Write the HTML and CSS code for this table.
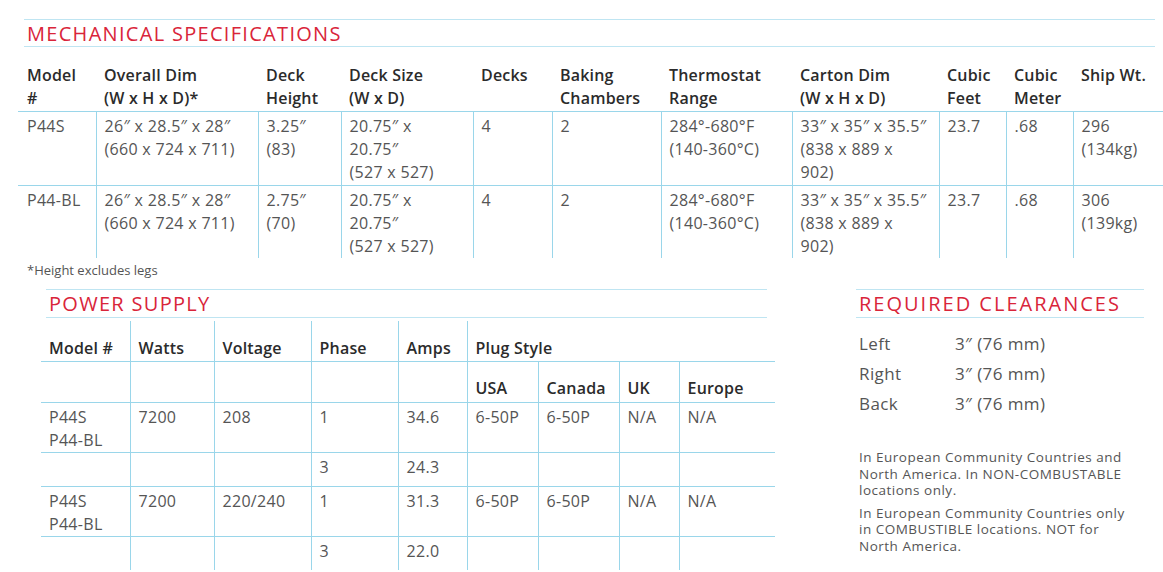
FILE: index.html
```html
<!DOCTYPE html>
<html lang="en">
<head>
<meta charset="utf-8">
<title>Specifications</title>
<link rel="stylesheet" href="styles.css">
</head>
<body>
<div class="page">
  <section class="mech">
    <h2 class="section-title mech-title">MECHANICAL SPECIFICATIONS</h2>
    <table class="spec mech-table">
      <colgroup>
        <col style="width:78px"><col style="width:162px"><col style="width:83px"><col style="width:132px"><col style="width:79px"><col style="width:109px"><col style="width:131px"><col style="width:147px"><col style="width:67px"><col style="width:67px"><col style="width:90px">
      </colgroup>
      <thead>
        <tr>
          <th>Model<br>#</th>
          <th>Overall Dim<br>(W x H x D)*</th>
          <th>Deck<br>Height</th>
          <th>Deck Size<br>(W x D)</th>
          <th>Decks</th>
          <th>Baking<br>Chambers</th>
          <th>Thermostat<br>Range</th>
          <th>Carton Dim<br>(W x H x D)</th>
          <th>Cubic<br>Feet</th>
          <th>Cubic<br>Meter</th>
          <th>Ship Wt.</th>
        </tr>
      </thead>
      <tbody>
        <tr>
          <td>P44S</td>
          <td>26″ x 28.5″ x 28″<br>(660 x 724 x 711)</td>
          <td>3.25″<br>(83)</td>
          <td>20.75″ x<br>20.75″<br>(527 x 527)</td>
          <td>4</td>
          <td>2</td>
          <td>284°-680°F<br>(140-360°C)</td>
          <td>33″ x 35″ x 35.5″<br>(838 x 889 x<br>902)</td>
          <td>23.7</td>
          <td>.68</td>
          <td>296<br>(134kg)</td>
        </tr>
        <tr>
          <td>P44-BL</td>
          <td>26″ x 28.5″ x 28″<br>(660 x 724 x 711)</td>
          <td>2.75″<br>(70)</td>
          <td>20.75″ x<br>20.75″<br>(527 x 527)</td>
          <td>4</td>
          <td>2</td>
          <td>284°-680°F<br>(140-360°C)</td>
          <td>33″ x 35″ x 35.5″<br>(838 x 889 x<br>902)</td>
          <td>23.7</td>
          <td>.68</td>
          <td>306<br>(139kg)</td>
        </tr>
      </tbody>
    </table>
    <p class="footnote">*Height excludes legs</p>
  </section>

  <div class="lower">
    <section class="power">
      <h2 class="section-title power-title">POWER SUPPLY</h2>
      <table class="spec power-table">
        <colgroup>
          <col style="width:89px"><col style="width:84px"><col style="width:97px"><col style="width:87px"><col style="width:69px"><col style="width:71px"><col style="width:81px"><col style="width:60px"><col style="width:96px">
        </colgroup>
        <thead>
          <tr class="head-main">
            <th>Model #</th>
            <th>Watts</th>
            <th>Voltage</th>
            <th>Phase</th>
            <th>Amps</th>
            <th colspan="4">Plug Style</th>
          </tr>
          <tr class="head-sub">
            <th></th>
            <th></th>
            <th></th>
            <th></th>
            <th></th>
            <th>USA</th>
            <th>Canada</th>
            <th>UK</th>
            <th>Europe</th>
          </tr>
        </thead>
        <tbody>
          <tr class="model-row">
            <td>P44S<br>P44-BL</td>
            <td>7200</td>
            <td>208</td>
            <td>1</td>
            <td>34.6</td>
            <td>6-50P</td>
            <td>6-50P</td>
            <td>N/A</td>
            <td>N/A</td>
          </tr>
          <tr class="phase-row">
            <td></td><td></td><td></td>
            <td>3</td>
            <td>24.3</td>
            <td></td><td></td><td></td><td></td>
          </tr>
          <tr class="model-row">
            <td>P44S<br>P44-BL</td>
            <td>7200</td>
            <td>220/240</td>
            <td>1</td>
            <td>31.3</td>
            <td>6-50P</td>
            <td>6-50P</td>
            <td>N/A</td>
            <td>N/A</td>
          </tr>
          <tr class="phase-row">
            <td></td><td></td><td></td>
            <td>3</td>
            <td>22.0</td>
            <td></td><td></td><td></td><td></td>
          </tr>
        </tbody>
      </table>
    </section>

    <section class="clearances">
      <h2 class="section-title power-title">REQUIRED CLEARANCES</h2>
      <dl class="clear-list">
        <div class="clear-row"><dt>Left</dt><dd>3″ (76 mm)</dd></div>
        <div class="clear-row"><dt>Right</dt><dd>3″ (76 mm)</dd></div>
        <div class="clear-row"><dt>Back</dt><dd>3″ (76 mm)</dd></div>
      </dl>
      <p class="note">In European Community Countries and<br>North America. In NON-COMBUSTABLE<br>locations only.</p>
      <p class="note">In European Community Countries only<br>in COMBUSTIBLE locations. NOT for<br>North America.</p>
    </section>
  </div>
</div>
</body>
</html>
```

FILE: styles.css
```css
* { box-sizing: border-box; }

html, body {
  margin: 0;
  padding: 0;
  background: #ffffff;
}

body {
  font-family: "Open Sans", "Liberation Sans", sans-serif;
  color: #555555;
}

.page {
  width: 1163px;
  height: 572px;
  overflow: hidden;
  padding-top: 19px;
}

.section-title {
  margin: 0;
  font-weight: 400;
  font-size: 20px;
  line-height: 26px;
  color: #d9253a;
  letter-spacing: 1.3px;
  padding-left: 3px;
  border-top: 1px solid #bfe5f2;
  border-bottom: 1px solid #bfe5f2;
}

.mech-title {
  margin: 0 8px 0 24px;
  padding-top: 1px;
  line-height: 25px;
}

.power-title {
  line-height: 27px;
}

.clearances .section-title {
  letter-spacing: 2px;
}

.spec {
  border-collapse: collapse;
  table-layout: fixed;
}

.spec th {
  font-weight: 600;
  color: #2b2b2b;
  text-align: left;
  font-size: 16px;
  line-height: 23px;
  letter-spacing: 0.2px;
  padding: 0 2px 0 8px;
  white-space: nowrap;
}

.spec td {
  font-size: 16px;
  line-height: 23px;
  letter-spacing: 0.3px;
  color: #555555;
  vertical-align: top;
  padding: 3px 2px 0 8px;
  white-space: nowrap;
}

/* mechanical table */
.mech-table {
  margin: 0 0 0 18px;
  width: 1145px;
}

.mech-table th:first-child,
.mech-table td:first-child {
  padding-left: 9px;
}

.mech-table thead th {
  vertical-align: top;
  padding-top: 17px;
  padding-bottom: 1px;
  border-bottom: 1px solid #9ad6ea;
}

.mech-table tbody td + td {
  border-left: 1px solid #9ad6ea;
}

.mech-table tbody tr + tr td {
  border-top: 1px solid #9ad6ea;
}

.mech-table tbody tr:first-child td {
  padding-bottom: 1px;
}

.footnote {
  margin: 4px 0 0 27px;
  font-size: 13px;
  line-height: 16px;
  color: #555555;
}

/* lower area */
.lower {
  display: flex;
  align-items: flex-start;
  margin-top: 11px;
}

.power {
  margin-left: 41px;
  width: 734px;
}

.power .section-title {
  margin: 0 8px 0 5px;
}

.power-table {
  width: 734px;
  margin-top: 3px;
}

.power-table th {
  vertical-align: bottom;
}

.power-table th + th,
.power-table td + td {
  border-left: 1px solid #9ad6ea;
}

.power-table tr + tr th,
.power-table tbody tr td {
  border-top: 1px solid #9ad6ea;
}

.power-table .head-main th { height: 40px; padding-bottom: 1px; }
.power-table .head-sub th { height: 41px; padding-bottom: 2px; }
.power-table .model-row td { height: 48px; }
.power-table .phase-row td { height: 34px; }

/* clearances */
.clearances {
  margin-left: 81px;
  width: 288px;
}

.clear-list {
  margin: 11px 0 0 0;
  padding: 0;
}

.clear-row {
  display: flex;
  font-size: 17px;
  line-height: 30px;
  letter-spacing: 0.4px;
  color: #555555;
}

.clear-row dt {
  width: 99px;
  padding-left: 3px;
}

.clear-row dd {
  margin: 0;
}

.note {
  font-size: 13.5px;
  line-height: 16.5px;
  letter-spacing: 0.5px;
  color: #555555;
  margin: 0 0 6px 3px;
}

.clear-list + .note {
  margin-top: 30px;
}
```
